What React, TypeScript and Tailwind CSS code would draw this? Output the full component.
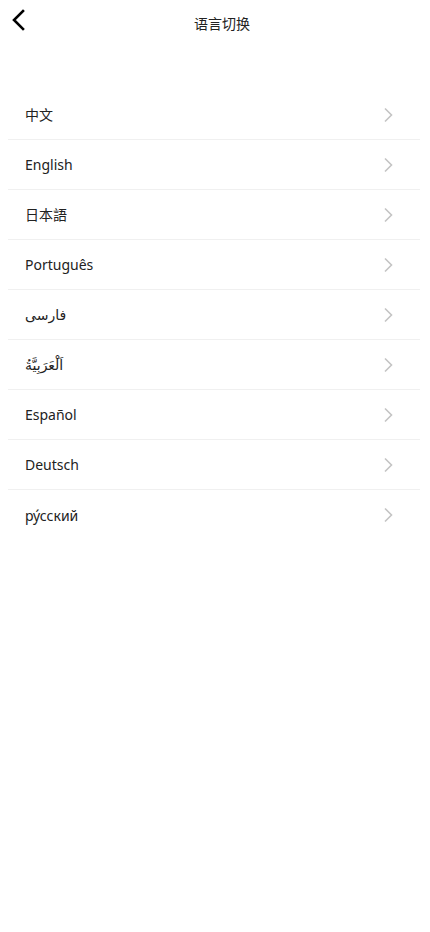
const languages = [
  "中文",
  "English",
  "日本語",
  "Português",
  "فارسی",
  "اَلْعَرَبِيَّةُ",
  "Español",
  "Deutsch",
  "ру́сский",
];

export default function App() {
  return (
    <div
      className="min-h-screen bg-white text-[#222]"
      style={{ fontFamily: '"Noto Sans", "Noto Sans CJK SC", "DejaVu Sans", sans-serif' }}
    >
      {/* 顶部导航 */}
      <header className="relative flex h-[46px] items-center justify-center pl-[14px]">
        <button className="absolute left-[6px] top-[8px] flex size-[24px] items-center justify-center">
          <svg width="16" height="22" viewBox="0 0 16 22" fill="none">
            <path d="M13 2 L4 11 L13 20" stroke="#000" strokeWidth="2.6" strokeLinecap="square" />
          </svg>
        </button>
        <span className="text-[14px]">语言切换</span>
      </header>

      <ul className="mt-[44px] pl-[8px] pr-[10px]">
        {languages.map((lang, i) => (
          <li
            key={lang}
            className={`flex h-[50px] items-center justify-between pl-[17px] pr-[27px] ${
              i < languages.length - 1 ? "border-b border-[#f0f0f0]" : ""
            }`}
          >
            <span className="text-[14px]" dir="auto">
              {lang}
            </span>
            <svg width="10" height="16" viewBox="0 0 10 16" fill="none">
              <path d="M2 1.5 L8.5 8 L2 14.5" stroke="#c4c4c4" strokeWidth="1.6" />
            </svg>
          </li>
        ))}
      </ul>
    </div>
  );
}
